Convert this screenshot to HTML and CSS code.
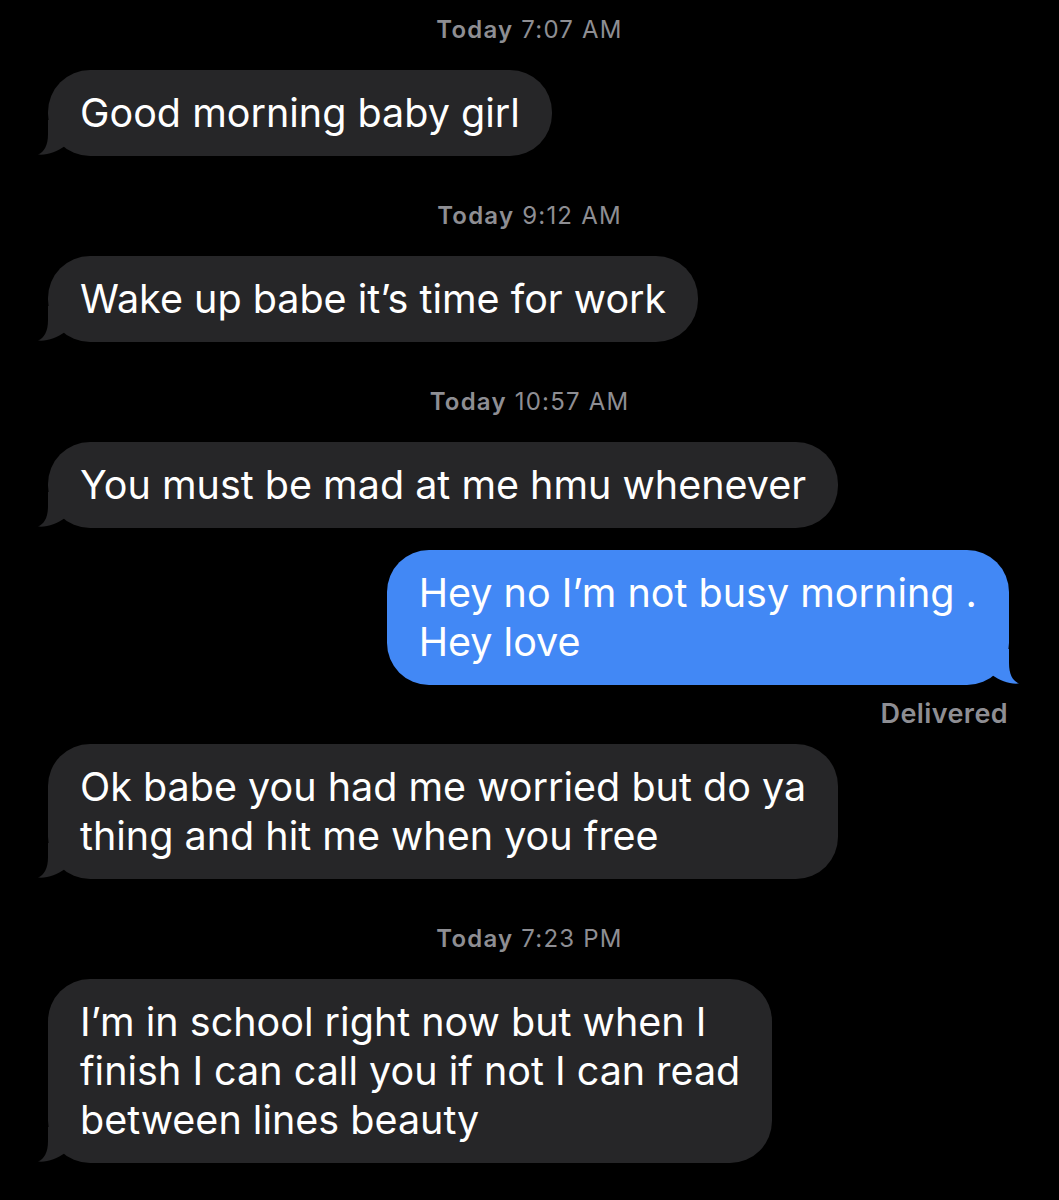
FILE: index.html
```html
<!DOCTYPE html>
<html lang="en">
<head>
    <meta charset="UTF-8">
    <meta name="viewport" content="width=device-width, initial-scale=1.0">
    <title>Messages</title>
    <link rel="stylesheet" href="styles.css">
</head>
<body>
    <div class="thread">
        <div class="stamp"><b>Today</b> 7:07 AM</div>
        <div class="row in">
            <div class="bubble">Good morning baby girl
                <svg class="tail" viewBox="0 0 40 40"><path d="M12 4 L12 18 C12 30 8 36 2 38.5 C11 39.5 21 35.5 29 30 L29 4 Z"/></svg>
            </div>
        </div>

        <div class="stamp"><b>Today</b> 9:12 AM</div>
        <div class="row in">
            <div class="bubble">Wake up babe it’s time for work
                <svg class="tail" viewBox="0 0 40 40"><path d="M12 4 L12 18 C12 30 8 36 2 38.5 C11 39.5 21 35.5 29 30 L29 4 Z"/></svg>
            </div>
        </div>

        <div class="stamp"><b>Today</b> 10:57 AM</div>
        <div class="row in">
            <div class="bubble">You must be mad at me hmu whenever
                <svg class="tail" viewBox="0 0 40 40"><path d="M12 4 L12 18 C12 30 8 36 2 38.5 C11 39.5 21 35.5 29 30 L29 4 Z"/></svg>
            </div>
        </div>

        <div class="row out">
            <div class="bubble">Hey no I’m not busy morning .<br>Hey love
                <svg class="tail" viewBox="0 0 40 40"><path d="M12 4 L12 18 C12 30 8 36 2 38.5 C11 39.5 21 35.5 29 30 L29 4 Z"/></svg>
            </div>
        </div>
        <div class="status">Delivered</div>

        <div class="row in">
            <div class="bubble">Ok babe you had me worried but do ya<br>thing and hit me when you free
                <svg class="tail" viewBox="0 0 40 40"><path d="M12 4 L12 18 C12 30 8 36 2 38.5 C11 39.5 21 35.5 29 30 L29 4 Z"/></svg>
            </div>
        </div>

        <div class="stamp"><b>Today</b> 7:23 PM</div>
        <div class="row in">
            <div class="bubble">I’m in school right now but when I<br>finish I can call you if not I can read<br>between lines beauty
                <svg class="tail" viewBox="0 0 40 40"><path d="M12 4 L12 18 C12 30 8 36 2 38.5 C11 39.5 21 35.5 29 30 L29 4 Z"/></svg>
            </div>
        </div>
    </div>
</body>
</html>
```

FILE: styles.css
```css
body {
    margin: 0;
    padding: 0;
    background-color: #000;
    font-family: Inter, "Noto Sans", sans-serif;
    color: #fff;
}
.thread {
    display: flex;
    flex-direction: column;
    padding-top: 16px;
    height: 1200px;
    box-sizing: border-box;
}
.stamp {
    text-align: center;
    font-size: 24px;
    line-height: 28px;
    letter-spacing: 1.2px;
    color: #8e8e93;
    margin-top: 46px;
    margin-bottom: 26px;
}
.stamp:first-child {
    margin-top: 0;
}
.stamp b {
    font-weight: 600;
}
.row {
    display: flex;
}
.row.in {
    padding-left: 48px;
}
.row.out {
    justify-content: flex-end;
    padding-right: 50px;
    margin-top: 22px;
}
.bubble {
    position: relative;
    padding: 18.5px 32px;
    border-radius: 42px;
    font-size: 39.5px;
    line-height: 49px;
    background-color: #262628;
    white-space: nowrap;
}
.row.out .bubble {
    background-color: #4288f5;
}
.tail {
    position: absolute;
    left: -12px;
    bottom: 0;
    width: 40px;
    height: 40px;
    fill: #262628;
}
.row.out .tail {
    left: auto;
    right: -12px;
    transform: scaleX(-1);
    fill: #4288f5;
}
.status {
    text-align: right;
    padding-right: 51px;
    font-size: 27px;
    line-height: 28px;
    letter-spacing: 0.4px;
    font-weight: 600;
    color: #8e8e93;
    margin-top: 15px;
    margin-bottom: 16px;
}
```
